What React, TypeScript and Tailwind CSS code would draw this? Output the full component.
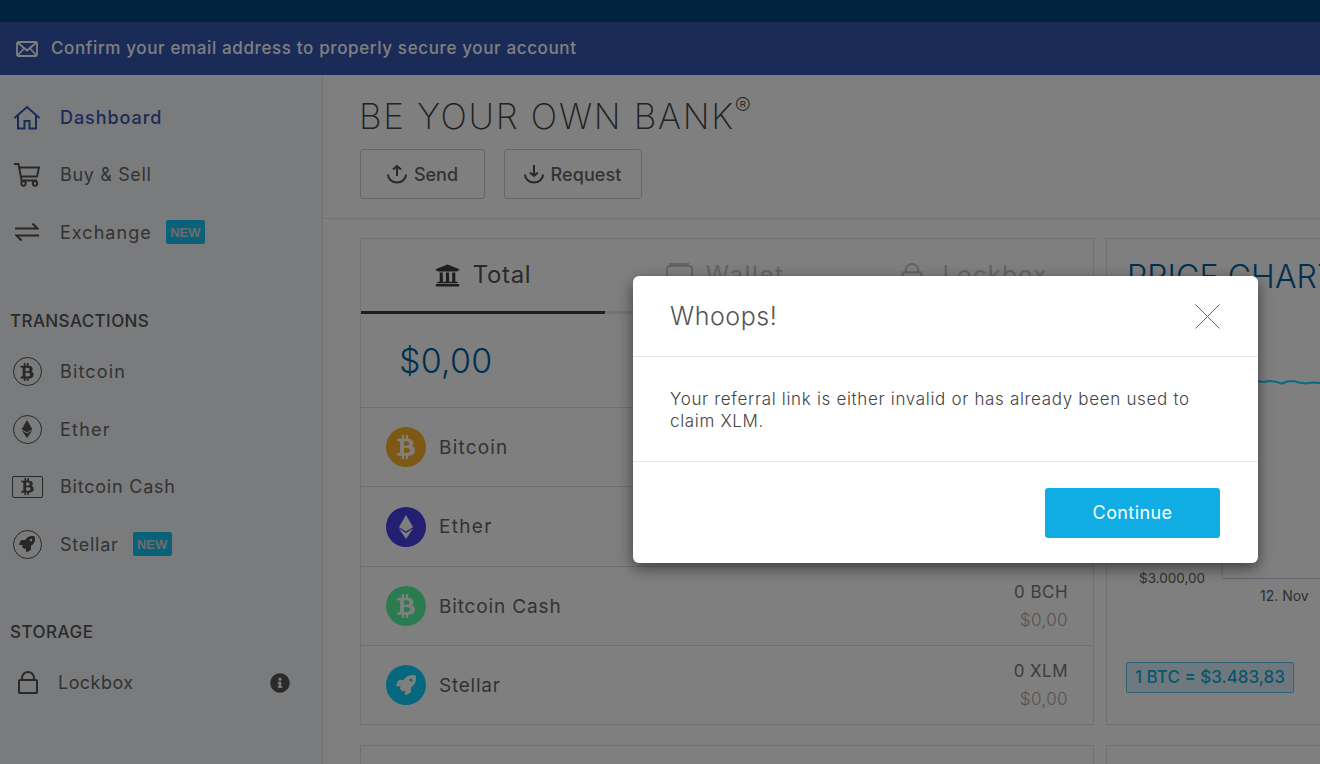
import React from "react";
import { FaBtc, FaEthereum, FaRocket, FaUniversity, FaInfoCircle } from "react-icons/fa";

const Badge = () => (
  <span className="ml-[14px] flex h-[24px] w-[39px] items-center justify-center rounded-[2px] bg-[#12c4f4] text-[13px] font-bold text-[#d8d8d8] [font-family:'Liberation_Sans',sans-serif]">
    NEW
  </span>
);

const HomeIcon = ({ c }: { c: string }) => (
  <svg width="28" height="25" viewBox="0 0 28 25" fill="none" stroke={c} strokeWidth="2">
    <path d="M1.5 13 14 2l12.5 11" />
    <path d="M5 10.5V23.5h6.5v-7.5h5v7.5H23V10.5" />
  </svg>
);
const CartIcon = () => (
  <svg width="26" height="24" viewBox="0 0 26 24" fill="none" stroke="#505050" strokeWidth="1.9">
    <path d="M0 1h4.5l3 16.5H23" />
    <path d="M5.4 4.5H25l-2 9H7" />
    <circle cx="9.5" cy="20.5" r="2.2" />
    <circle cx="21" cy="20.5" r="2.2" />
  </svg>
);
const SwapIcon = () => (
  <svg width="24" height="20" viewBox="0 0 24 20" fill="none" stroke="#505050" strokeWidth="2">
    <path d="M0 6.5h22.5L17.5 1.5" />
    <path d="M24 13.5H1.5l5 5" />
  </svg>
);
const CoinOutline = ({ children }: { children: React.ReactNode }) => (
  <span className="flex h-[29px] w-[29px] items-center justify-center rounded-full border-[1.5px] border-[#505050] text-[#505050]">
    {children}
  </span>
);
const BillIcon = () => (
  <span className="flex h-[22px] w-[31px] items-center justify-center rounded-[2px] border-[1.5px] border-[#505050] text-[#505050]">
    <FaBtc size={17} />
  </span>
);
const LockIcon = ({ c = "#505050", w = 20, h = 23 }: { c?: string; w?: number; h?: number }) => (
  <svg width={w} height={h} viewBox="0 0 20 23" fill="none" stroke={c} strokeWidth="2">
    <rect x="1" y="9" width="18" height="13" rx="1" />
    <path d="M4 9V7a6 6 0 0 1 12 0v2" />
  </svg>
);
const SendIcon = ({ down }: { down?: boolean }) => (
  <svg width="20" height="20" viewBox="0 0 20 20" fill="none" stroke="#505050" strokeWidth="2">
    <path d="M1 10.5a9 8 0 0 0 18 0" />
    {down ? <path d="M10 1v11M6 8.5 10 12l4-3.5" /> : <path d="M10 12V2M6 5.5 10 2l4 3.5" />}
  </svg>
);

const NavItem = ({ icon, label, active, badge, track }: { icon: React.ReactNode; label: string; active?: boolean; badge?: boolean; track: string }) => (
  <div className="flex h-[57.5px] items-center">
    <span className="flex w-[60px] shrink-0 items-center justify-center pr-[6px]">{icon}</span>
    <span className={(active ? "text-[18px] font-medium text-[#3556b0] " : "text-[18px] font-normal text-[#666668] ") + track}>{label}</span>
    {badge && <Badge />}
  </div>
);

const SectionTitle = ({ children, className }: { children: React.ReactNode; className: string }) => (
  <div className={"pl-[10px] text-[17px] font-medium leading-[20px] text-[#545456] " + className}>{children}</div>
);

const Row = ({ color, icon, label, value, fiat, h, track }: { color: string; icon: React.ReactNode; label: string; value: string; fiat: string; h: string; track: string }) => (
  <div className={"flex items-center justify-between border-t border-[#dedede] pl-[25px] pr-[25px] " + h}>
    <div className="flex items-center gap-[13px]">
      <span className="flex h-[40px] w-[40px] items-center justify-center rounded-full text-white" style={{ backgroundColor: color }}>
        {icon}
      </span>
      <span className={"pt-[2px] text-[19px] text-[#666668] " + track}>{label}</span>
    </div>
    <div className="flex flex-col items-end gap-[8px] text-[17px] leading-[20px]">
      <span className="tracking-[0.45px] text-[#7a7a7a]">{value}</span>
      <span className="font-light tracking-[0.4px] text-[#a8a8a8]">{fiat}</span>
    </div>
  </div>
);

export default function App() {
  return (
    <div className="relative flex h-[764px] w-[1320px] flex-col overflow-hidden bg-white [font-family:Inter,'Noto_Sans',sans-serif]">
      <div className="h-[22px] shrink-0 bg-[#00467e]" />
      <div className="flex h-[53px] shrink-0 items-center gap-[13px] bg-[#3556b0] pl-[16px] text-[17px] font-medium tracking-[0.63px] text-white">
        <svg width="22" height="16" viewBox="0 0 22 16" fill="none" stroke="#ffffff" strokeWidth="1.8">
          <rect x="1" y="1" width="20" height="14" rx="1.5" />
          <path d="m1.5 1.5 9.5 8 9.5-8M1.5 14.5l6.5-7M20.5 14.5l-6.5-7" />
        </svg>
        <span>Confirm your email address to properly secure your account</span>
      </div>

      <div className="flex min-h-0 flex-1">
        <aside className="w-[323px] shrink-0 border-r border-[#e2e2e2] bg-[#f5f6f8] pt-[13.5px]">
          <NavItem active icon={<HomeIcon c="#3556b0" />} label="Dashboard" track="tracking-[0.95px]" />
          <NavItem icon={<CartIcon />} label="Buy & Sell" track="tracking-[0.65px]" />
          <NavItem icon={<SwapIcon />} label="Exchange" badge track="tracking-[1.05px]" />
          <SectionTitle className="mt-[50px] mb-[12px] tracking-[0.4px]">TRANSACTIONS</SectionTitle>
          <NavItem icon={<CoinOutline><FaBtc size={18} /></CoinOutline>} label="Bitcoin" track="tracking-[1.15px]" />
          <NavItem icon={<CoinOutline><FaEthereum size={18} /></CoinOutline>} label="Ether" track="tracking-[1.25px]" />
          <NavItem icon={<BillIcon />} label="Bitcoin Cash" track="tracking-[0.78px]" />
          <NavItem icon={<CoinOutline><FaRocket size={16} /></CoinOutline>} label="Stellar" badge track="tracking-[0.75px]" />
          <SectionTitle className="mt-[49px] mb-[12px] tracking-[0.5px]">STORAGE</SectionTitle>
          <div className="flex h-[57.5px] items-center">
            <span className="flex w-[58px] shrink-0 justify-center pr-[3px]"><LockIcon /></span>
            <span className="text-[18px] tracking-[0.45px] text-[#666668]">Lockbox</span>
            <FaInfoCircle size={20} className="ml-auto mr-[32px] text-[#545456]" />
          </div>
        </aside>

        <main className="min-w-0 flex-1 overflow-hidden">
          <header className="h-[144px] border-b border-[#e4e4e4] pl-[36px] pt-[20px]">
            <h1 className="text-[35px] font-extralight leading-[42px] tracking-[1.7px] text-[#444446]">
              BE YOUR OWN BANK<sup className="top-[-14px] align-baseline text-[24px] font-extralight leading-none">®</sup>
            </h1>
            <div className="mt-[12px] flex gap-[19px] pl-[1px]">
              <button className="flex h-[50px] w-[125px] items-center justify-center gap-[7px] rounded-[3px] border border-[#cfcfcf] text-[18px] font-medium text-[#666668]">
                <SendIcon />Send
              </button>
              <button className="flex h-[50px] w-[138px] items-center justify-center gap-[6px] rounded-[3px] border border-[#cfcfcf] text-[18px] font-medium tracking-[0.1px] text-[#666668]">
                <SendIcon down />Request
              </button>
            </div>
          </header>

          <div className="flex w-[1100px] gap-[12px] pl-[37px] pt-[19px]">
            <section className="h-[487px] w-[734px] shrink-0 border border-[#e4e4e4]">
              <div className="flex h-[75px] border-b-[3px] border-[#e9e9e9]">
                <div className="-mb-[3px] flex h-[75px] w-[244px] items-center justify-center gap-[13px] border-b-[3px] border-[#3c3c3c] text-[24px] tracking-[0.6px] text-[#545456]">
                  <FaUniversity size={25} className="text-[#3c3c3c]" />Total
                </div>
                <div className="flex w-[245px] items-center justify-center gap-[13px] pr-[5px] text-[24px] tracking-[1.6px] text-[#c8c8c8]">
                  <svg width="27" height="24" viewBox="0 0 27 24" fill="none" stroke="#c8c8c8" strokeWidth="2"><rect x="1" y="3" width="25" height="20" rx="3" /><path d="M4 3V1h18v2" /></svg>
                  Wallet
                </div>
                <div className="flex w-[243px] items-center justify-center gap-[20px] pl-[5px] text-[24px] tracking-[1.2px] text-[#c8c8c8]">
                  <LockIcon c="#c8c8c8" w={22} h={24} />Lockbox
                </div>
              </div>
              <div className="flex h-[93px] items-center pl-[38px] text-[34px] font-light tracking-[0.2px] text-[#00609e]">$0,00</div>
              <Row h="h-[79px]" track="tracking-[1.2px]" color="#fcb02a" icon={<FaBtc size={24} />} label="Bitcoin" value="0 BTC" fiat="$0,00" />
              <Row h="h-[80px]" track="tracking-[1.3px]" color="#483ee0" icon={<FaEthereum size={24} />} label="Ether" value="0 ETH" fiat="$0,00" />
              <Row h="h-[79px]" track="tracking-[0.85px]" color="#54f8a0" icon={<FaBtc size={24} />} label="Bitcoin Cash" value="0 BCH" fiat="$0,00" />
              <Row h="h-[79px]" track="tracking-[0.75px]" color="#0ad0ff" icon={<FaRocket size={20} />} label="Stellar" value="0 XLM" fiat="$0,00" />
            </section>

            <section className="h-[487px] w-[400px] shrink-0 border border-[#e4e4e4] pl-[20px] pt-[19px]">
              <h2 className="whitespace-nowrap text-[32px] font-light leading-[38px] tracking-[0.1px] text-[#00609e]">PRICE CHART</h2>
              <svg width="213" height="320" viewBox="0 0 213 320" className="-ml-[20px] mt-[1px] block" fill="none">
                <path d="M115 60V281.500H213" stroke="#c5d2e2" strokeWidth="1" />
                <path d="M150 84 L156 85 L163 84 L170 85 L175 86.500 L180 84.500 L186 84 L192 85.500 L198 86.500 L206 85.500 L213 86" stroke="#14d4ff" strokeWidth="2.200" />
                <text x="98" y="286" textAnchor="end" fontSize="13.500" fill="#606060">$3.000,00</text>
                <text x="153" y="304" fontSize="14" fill="#606060">12. Nov</text>
              </svg>
              <div className="-ml-[1px] mt-[45px] flex h-[31px] w-[168px] items-center justify-center whitespace-nowrap rounded-[2px] border border-[#5cc8ee] bg-[#def3fb] text-[17px] font-medium text-[#12a8dc]">
                1 BTC = $3.483,83
              </div>
            </section>
          </div>

          <div className="flex w-[1100px] gap-[12px] pl-[37px] pt-[20px]">
            <div className="h-[60px] w-[734px] shrink-0 border border-[#e4e4e4]" />
            <div className="h-[60px] w-[400px] shrink-0 border border-[#e4e4e4]" />
          </div>
        </main>
      </div>

      <div className="absolute inset-0 bg-black/50" />

      <div className="absolute left-[633px] top-[276px] flex h-[287px] w-[625px] flex-col rounded-[6px] bg-white shadow-[0_5px_15px_rgba(0,0,0,0.5)]">
        <div className="flex h-[81px] shrink-0 items-center justify-between border-b border-[#e6e6e6] pl-[37px] pr-[38px]">
          <span className="text-[25px] font-light leading-[30px] tracking-[0.55px] text-[#545456]">Whoops!</span>
          <svg width="25" height="25" viewBox="0 0 25 25" stroke="#4b6a88" strokeWidth="1" fill="none">
            <path d="M0.5 0.5 24.5 24.5M24.5 0.5 0.5 24.5" />
          </svg>
        </div>
        <div className="flex h-[105px] shrink-0 items-center border-b border-[#e6e6e6] pl-[37px] pr-[38px] pt-[2px] text-[17px] font-light leading-[22px] tracking-[0.67px] text-[#444446]">
          <p>Your referral link is either invalid or has already been used to claim XLM.</p>
        </div>
        <div className="flex flex-1 justify-end pr-[38px] pt-[26px]">
          <button className="flex h-[50px] w-[175px] items-center justify-center rounded-[3px] bg-[#10ade4] pb-[1px] text-[18px] tracking-[0.4px] text-white">Continue</button>
        </div>
      </div>
    </div>
  );
}
